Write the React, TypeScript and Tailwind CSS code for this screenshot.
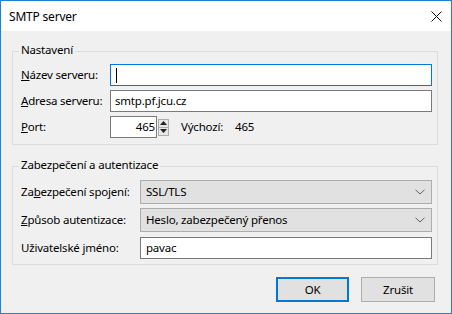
import React from "react";

const font = { fontFamily: '"Noto Sans", "Segoe UI", sans-serif' };

function Select({ value }: { value: string }) {
  return (
    <div className="flex-1 h-[24px] bg-[#e1e1e1] border border-[#adadad] flex items-center pl-[5px] pr-[5px] justify-between">
      <span>{value}</span>
      <svg width="10" height="6" viewBox="0 0 10 6" className="mr-[1px]">
        <path d="M0.5 0.8 L5 5 L9.5 0.8" fill="none" stroke="#606060" strokeWidth="1" />
      </svg>
    </div>
  );
}

export default function App() {
  return (
    <div
      className="w-[452px] h-[314px] border border-[#1883d7] bg-[#f0f0f0] flex flex-col text-[11.5px] tracking-[-0.2px] text-black leading-none overflow-hidden"
      style={font}
    >
      <div className="h-[30px] bg-white flex items-center justify-between pl-[8px] pr-[9px] shrink-0">
        <span className="text-[12px] mt-[1px]">SMTP server</span>
        <svg width="11" height="11" viewBox="0 0 11 11">
          <path d="M0.5 0.5 L10.5 10.5 M10.5 0.5 L0.5 10.5" stroke="#111" strokeWidth="1" />
        </svg>
      </div>

      <div className="flex flex-col pl-[11px]">
        {/* Group 1 */}
        <div className="relative mt-[20px] w-[426px] border border-[#dcdcdc] pt-[12px] pb-[6px] pl-[8px] pr-[5px] flex flex-col gap-[4px]">
          <span className="absolute -top-[8px] left-[6px] bg-[#f0f0f0] px-[2px]">Nastavení</span>
          <div className="flex items-center h-[22px]">
            <span className="w-[89px]"><u>N</u>ázev serveru:</span>
            <div className="flex-1 h-[22px] bg-white border border-[#0078d7] flex items-center pl-[5px]">
              <div className="w-[1px] h-[15px] bg-black" />
            </div>
          </div>
          <div className="flex items-center h-[22px]">
            <span className="w-[89px]"><u>A</u>dresa serveru:</span>
            <div className="flex-1 h-[22px] bg-white border border-[#7a7a7a] flex items-center pl-[4px]">
              smtp.pf.jcu.cz
            </div>
          </div>
          <div className="flex items-center h-[22px]">
            <span className="w-[89px]"><u>P</u>ort:</span>
            <div className="w-[47px] h-[22px] bg-white border border-[#7a7a7a] flex items-center justify-end pr-[1px]">
              465
            </div>
            <div className="ml-[1px] w-[11px] h-[17px] flex flex-col border border-[#adadad] bg-[#e6e6e6]">
              <div className="flex-1 flex items-center justify-center border-b border-[#adadad]">
                <svg width="7" height="4" viewBox="0 0 7 4"><path d="M0 4 L3.5 0 L7 4 Z" fill="#222" /></svg>
              </div>
              <div className="flex-1 flex items-center justify-center">
                <svg width="7" height="4" viewBox="0 0 7 4"><path d="M0 0 L3.5 4 L7 0 Z" fill="#222" /></svg>
              </div>
            </div>
            <span className="ml-[12px]">Výchozí:</span>
            <span className="ml-[12px]">465</span>
          </div>
        </div>

        {/* Group 2 */}
        <div className="relative mt-[21px] w-[426px] border border-[#dcdcdc] pt-[13px] pb-[5px] pl-[8px] pr-[5px] flex flex-col">
          <span className="absolute -top-[8px] left-[6px] bg-[#f0f0f0] px-[2px]">Zabezpečení a autentizace</span>
          <div className="flex items-center">
            <span className="w-[119px]">Za<u>b</u>ezpečení spojení:</span>
            <Select value="SSL/TLS" />
          </div>
          <div className="flex items-center mt-[4px]">
            <span className="w-[119px]"><u>Z</u>působ autentizace:</span>
            <Select value="Heslo, zabezpečený přenos" />
          </div>
          <div className="flex items-center mt-[5px]">
            <span className="w-[119px]">Uživatelské jméno:</span>
            <div className="flex-1 h-[22px] bg-white border border-[#7a7a7a] flex items-center pl-[5px]">
              pavac
            </div>
          </div>
        </div>

        <div className="flex justify-end gap-[12px] mt-[12px] pr-[16px]">
          <button className="w-[73px] h-[25px] bg-[#e1e1e1] border-2 border-[#0078d7] flex items-center justify-center">
            OK
          </button>
          <button className="w-[74px] h-[25px] bg-[#e1e1e1] border border-[#adadad] flex items-center justify-center">
            Zrušit
          </button>
        </div>
      </div>
    </div>
  );
}
